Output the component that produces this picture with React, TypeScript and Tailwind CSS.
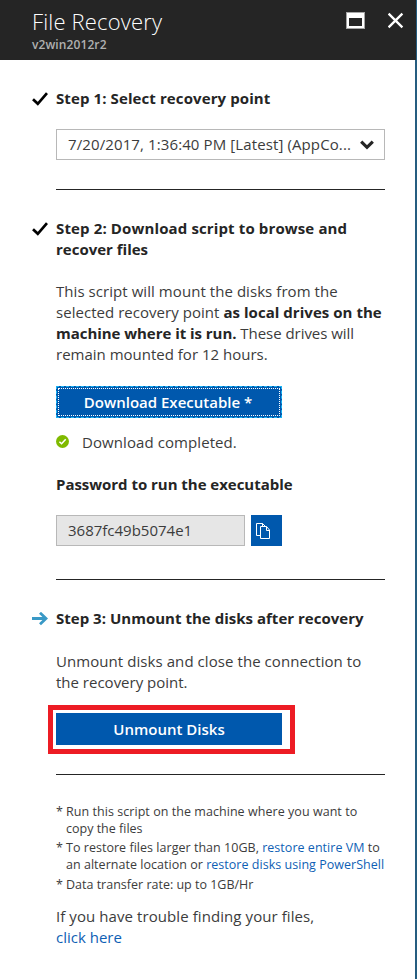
import type { ReactNode } from "react";

function Line({ className = "", children }: { className?: string; children: ReactNode }) {
  return <span className={`block whitespace-nowrap ${className}`}>{children}</span>;
}

function Check() {
  return (
    <svg className="mt-[4px] block h-[14px] w-[16px] shrink-0" viewBox="0 0 16 14" fill="none">
      <path d="M1 7.2 5.8 11.8 15 1.2" stroke="#000" strokeWidth="2.7" />
    </svg>
  );
}

function Rule() {
  return <div className="ml-[56px] h-px w-[329px] bg-[#252525]" />;
}

export default function App() {
  return (
    <div className="flex h-[979px] w-[417px] overflow-hidden bg-[#255d80] font-['Open_Sans','Noto_Sans',sans-serif] text-[15px] leading-[21px] text-[#3c3c3c]">
      <div className="flex w-[415px] flex-col bg-white">
        <header className="flex h-[60px] w-[416px] shrink-0 justify-between bg-[#252525] pl-[32px]">
          <div className="pt-[6px]">
            <h1 className="text-[22px] leading-[30px] font-light tracking-[0.16px] whitespace-nowrap text-white">File Recovery</h1>
            <p className="text-[12px] leading-[17px] font-semibold tracking-[0.1px] whitespace-nowrap text-[#b0b0b0]">v2win2012r2</p>
          </div>
          <div className="flex gap-[23px] pt-[12px] pr-[12px]">
            <svg className="block h-[17px] w-[19px]" viewBox="0 0 19 17">
              <path d="M0 0h19v17H0z" fill="#a5a5a5" />
              <path d="M1 1h17v15H1z" fill="#fff" />
              <path d="M3 6h13v8H3z" fill="#252525" />
            </svg>
            <svg className="block h-[17px] w-[16px]" viewBox="0 0 16 17">
              <path d="M.6 1.6 14.4 15.400M14.400 1.600.6 15.400" stroke="#fff" strokeWidth="2.3" />
            </svg>
          </div>
        </header>

        <main className="flex flex-col pt-[28px]">
          <h2 className="flex gap-[8px] pl-[32px] font-bold text-[#252525]">
            <Check />
            <Line className="tracking-[0.1px]">Step 1: Select recovery point</Line>
          </h2>
          <div className="mt-[20px] ml-[56px] flex h-[31px] w-[329px] items-center justify-between border border-[#b8b8b8] pr-[10px] pl-[11px]">
            <Line className="tracking-[0.11px]">7/20/2017, 1:36:40 PM [Latest] (AppCo...</Line>
            <svg className="block h-[10px] w-[14px]" viewBox="0 0 14 10" fill="none">
              <path d="M1.2 1.7 7 7.3l5.8-5.6" stroke="#252525" strokeWidth="3.2" />
            </svg>
          </div>
          <div className="mt-[29px]"><Rule /></div>

          <h2 className="mt-[28px] flex gap-[8px] pl-[32px] font-bold text-[#252525]">
            <Check />
            <span>
              <Line className="tracking-[0.13px]">Step 2: Download script to browse and</Line>
              <Line>recover files</Line>
            </span>
          </h2>
          <p className="mt-[21px] ml-[56px]">
            <Line className="tracking-[0.06px]">This script will mount the disks from the</Line>
            <Line className="tracking-[0.04px]">selected recovery point <b className="text-[#252525]">as local drives on the</b></Line>
            <Line className="tracking-[-0.04px]"><b className="text-[#252525]">machine where it is run.</b> These drives will</Line>
            <Line>remain mounted for 12 hours.</Line>
          </p>
          <button className="mt-[21px] ml-[56px] flex h-[32px] w-[226px] border border-dashed border-[#19b4f5] bg-[#0058ad] p-px font-semibold text-white">
            <span className="flex h-full w-full items-center justify-center border border-dotted border-white pr-[2px]">
              <Line>Download Executable *</Line>
            </span>
          </button>
          <div className="mt-[14px] ml-[56px] flex h-[21px] gap-[13px]">
            <svg className="mt-[3px] block size-[13px]" viewBox="0 0 13 13" fill="none">
              <circle cx="6.5" cy="6.5" r="6.5" fill="#7fba00" />
              <path d="m3.4 6.7 2.2 2.1 4.1-4.5" stroke="#fff" strokeWidth="1.5" />
            </svg>
            <Line className="tracking-[0.08px]">Download completed.</Line>
          </div>
          <h3 className="mt-[21px] ml-[56px] font-bold text-[#252525]"><Line className="tracking-[-0.03px]">Password to run the executable</Line></h3>
          <div className="mt-[20px] ml-[56px] flex gap-[6px]">
            <div className="flex h-[31px] w-[189px] items-center border border-[#b8b8b8] bg-[#e6e6e6] pl-[11px]">
              <Line>3687fc49b5074e1</Line>
            </div>
            <button className="flex size-[31px] bg-[#0058ad] pt-[8px] pl-[5px]">
              <svg className="block h-[17px] w-[15px]" viewBox="0 0 15 17" fill="none" stroke="#fff">
                <path d="M4 12.5H.5V.5h6l3 3M6.5.5v3" />
                <path d="M4.500 3.500h6l3 3.500v8.500h-9zM10.500 3.500v4h3" />
              </svg>
            </button>
          </div>
          <div className="mt-[33px]"><Rule /></div>

          <h2 className="mt-[28px] flex gap-[8px] pl-[32px] font-bold text-[#252525]">
            <svg className="mt-[4px] block h-[14px] w-[16px] shrink-0" viewBox="0 0 16 14" fill="none">
              <path d="M0 6.500h14M8 .8l6 5.700L8 12.200" stroke="#3999c6" strokeWidth="2.800" />
            </svg>
            <Line className="tracking-[0.02px]">Step 3: Unmount the disks after recovery</Line>
          </h2>
          <p className="mt-[22px] ml-[56px]">
            <Line className="tracking-[0.07px]">Unmount disks and close the connection to</Line>
            <Line>the recovery point.</Line>
          </p>
          <div className="mt-[12px] ml-[48px] h-[49px] w-[247px] border-[5px] border-[#ed1c24] pt-[3px] pl-[3px]">
            <button className="flex h-[32px] w-[226px] items-center justify-center bg-[#0058ad] font-semibold text-white">
              <Line>Unmount Disks</Line>
            </button>
          </div>
          <div className="mt-[20px]"><Rule /></div>

          <ul className="mt-[28px] ml-[56px] flex flex-col gap-[2px] text-[12.5px] leading-[17px]">
            <li className="flex"><span className="w-[10px]">*</span>
              <span>
                <Line className="tracking-[0.05px]">Run this script on the machine where you want to</Line>
                <Line>copy the files</Line>
              </span>
            </li>
            <li className="flex"><span className="w-[10px]">*</span>
              <span>
                <Line className="tracking-[0.03px]">To restore files larger than 10GB, <a className="text-[#0f5fb5]">restore entire VM</a> to</Line>
                <Line className="tracking-[0.03px]">an alternate location or <a className="text-[#0f5fb5]">restore disks using PowerShell</a></Line>
              </span>
            </li>
            <li className="mt-px flex"><span className="w-[10px]">*</span>
              <Line>Data transfer rate: up to 1GB/Hr</Line>
            </li>
          </ul>
          <p className="mt-[13px] ml-[56px]">
            <Line className="tracking-[0.08px]">If you have trouble finding your files,</Line>
            <Line><a className="text-[#0f5fb5]">click here</a></Line>
          </p>
        </main>
      </div>
    </div>
  );
}
